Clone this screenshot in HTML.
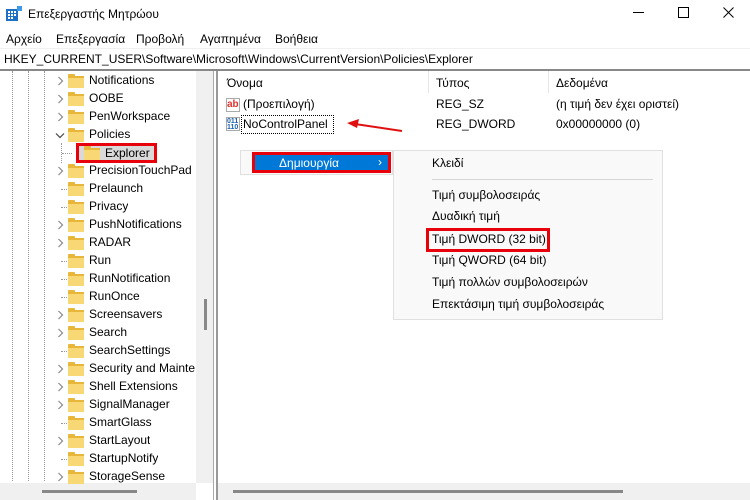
<!DOCTYPE html>
<html><head><meta charset="utf-8"><style>
*{margin:0;padding:0;box-sizing:border-box}
body{width:750px;height:500px;overflow:hidden;background:#fff;font-family:"Liberation Sans","DejaVu Sans",sans-serif;font-size:12px;color:#000;position:relative}
.a{position:absolute;white-space:nowrap}
.fold{position:absolute;width:16px;height:12px;background:#f8d775;border-top:2px solid #e8b73a}
.fold:before{content:"";position:absolute;left:0;top:-4px;width:7px;height:3px;background:#e8b73a;border-radius:1px 1px 0 0}
.chev{position:absolute}
.dv{position:absolute;border-left:1px dotted #999}
</style></head><body>
<!-- title -->
<svg class="a" style="left:6px;top:6px" width="16" height="16"><rect x="0" y="3" width="12" height="12" fill="#1e6fc8"/><g fill="#fff"><rect x="2" y="5" width="2" height="2"/><rect x="5" y="5" width="2" height="2"/><rect x="8" y="5" width="2" height="2"/><rect x="2" y="8" width="2" height="2"/><rect x="5" y="8" width="2" height="2"/><rect x="8" y="8" width="2" height="2"/><rect x="2" y="11" width="2" height="2"/><rect x="5" y="11" width="2" height="2"/></g><rect x="11" y="0" width="5" height="5" fill="#3d9ae8"/></svg>
<div class="a" style="left:28px;top:7px;font-size:12px">Επεξεργαστής Μητρώου</div>
<div class="a" style="left:633px;top:12px;width:11px;border-top:1px solid #000"></div>
<div class="a" style="left:678px;top:7px;width:11px;height:11px;border:1px solid #000"></div>
<svg class="a" style="left:723px;top:7px" width="11" height="11"><path d="M0.5 0.5L10.5 10.5M10.5 0.5L0.5 10.5" stroke="#000" stroke-width="1"/></svg>
<!-- menu -->
<div class="a" style="left:6px;top:32px">Αρχείο</div>
<div class="a" style="left:56px;top:32px">Επεξεργασία</div>
<div class="a" style="left:136px;top:32px">Προβολή</div>
<div class="a" style="left:200px;top:32px">Αγαπημένα</div>
<div class="a" style="left:275px;top:32px">Βοήθεια</div>
<!-- address -->
<div class="a" style="left:0;top:48px;width:750px;height:1px;background:#f0f0f0"></div>
<div class="a" style="left:4px;top:52px">HKEY_CURRENT_USER\Software\Microsoft\Windows\CurrentVersion\Policies\Explorer</div>
<div class="a" style="left:0;top:69px;width:750px;height:2px;background:#888"></div>
<!-- tree -->
<div class="dv" style="left:12px;top:71px;height:410px"></div>
<div class="dv" style="left:28px;top:71px;height:410px"></div>
<div class="dv" style="left:44px;top:71px;height:410px"></div>
<div class="dv" style="left:61px;top:143px;height:20px"></div>
<div class="a" style="left:62px;top:153px;width:10px;border-top:1px dotted #999"></div>
<div class="a" style="left:196px;top:71px;width:17px;height:412px;background:#f0f0f0"></div>
<div class="a" style="left:204px;top:299px;width:3px;height:31px;background:#888"></div>
<div class="a" style="left:213px;top:71px;width:1px;height:429px;background:#aaa"></div>
<div class="a" style="left:216px;top:71px;width:2px;height:429px;background:#999"></div>
<div class="a" style="left:0;top:483px;width:196px;height:17px;background:#f0f0f0"></div>
<div class="a" style="left:42px;top:490px;width:95px;height:3px;background:#888"></div>
<div class="a" style="left:218px;top:483px;width:532px;height:17px;background:#f0f0f0"></div>
<div class="a" style="left:233px;top:490px;width:390px;height:3px;background:#888"></div>
<div id="tree"></div>
<!-- explorer -->
<div class="a" style="left:76px;top:143px;width:81px;height:20px;border:3px solid #e8000b;background:#d9d9d9"></div>
<div class="fold" style="left:84px;top:148px"></div>
<div class="a" style="left:105px;top:146px">Explorer</div>
<!-- right pane -->
<div class="a" style="left:428px;top:71px;width:1px;height:22px;background:#e5e5e5"></div>
<div class="a" style="left:548px;top:71px;width:1px;height:22px;background:#e5e5e5"></div>
<div class="a" style="left:227px;top:76px">Όνομα</div>
<div class="a" style="left:436px;top:76px">Τύπος</div>
<div class="a" style="left:556px;top:76px">Δεδομένα</div>
<div class="a" style="left:226px;top:98px;width:14px;height:14px;border:1px solid #aaa;color:#e03030;font-weight:bold;font-size:10px;line-height:12px">ab</div>
<div class="a" style="left:243px;top:97px">(Προεπιλογή)</div>
<div class="a" style="left:436px;top:97px">REG_SZ</div>
<div class="a" style="left:556px;top:97px">(η τιμή δεν έχει οριστεί)</div>
<div class="a" style="left:226px;top:117px;width:14px;height:14px;border:1px solid #aaa;color:#1c5fb0;font-weight:bold;font-size:7px;line-height:6px;padding-top:1px">011<br>110</div>
<div class="a" style="left:241px;top:115px;width:93px;height:19px;border:1px dotted #000"></div>
<div class="a" style="left:243px;top:117px">NoControlPanel</div>
<div class="a" style="left:436px;top:117px">REG_DWORD</div>
<div class="a" style="left:556px;top:117px">0x00000000 (0)</div>
<svg class="a" style="left:345px;top:118px" width="60" height="16"><line x1="57" y1="13" x2="10" y2="6" stroke="#e01010" stroke-width="2"/><polygon points="2,5 14,1 12,10" fill="#e01010"/></svg>
<!-- context menu -->
<div class="a" style="left:240px;top:150px;width:153px;height:25px;background:#f9f9f9;border:1px solid #e0e0e0"></div>
<div class="a" style="left:252px;top:152px;width:139px;height:21px;background:#0078d7;border:3px solid #e8000b"></div>
<div class="a" style="left:279px;top:156px;color:#fff">Δημιουργία</div>
<div class="a" style="left:378px;top:155px;color:#fff">›</div>
<div class="a" style="left:393px;top:150px;width:270px;height:170px;background:#f9f9f9;border:1px solid #e0e0e0"></div>
<div class="a" style="left:432px;top:179px;width:221px;height:1px;background:#d5d5d5"></div>
<div class="a" style="left:432px;top:156px">Κλειδί</div>
<div class="a" style="left:432px;top:188px">Τιμή συμβολοσειράς</div>
<div class="a" style="left:432px;top:209px">Δυαδική τιμή</div>
<div class="a" style="left:426px;top:228px;width:124px;height:24px;border:3px solid #e8000b"></div>
<div class="a" style="left:432px;top:232px">Τιμή DWORD (32 bit)</div>
<div class="a" style="left:432px;top:253px">Τιμή QWORD (64 bit)</div>
<div class="a" style="left:432px;top:275px">Τιμή πολλών συμβολοσειρών</div>
<div class="a" style="left:432px;top:297px">Επεκτάσιμη τιμή συμβολοσειράς</div>
<script>
var items=[["Notifications",1],["OOBE",1],["PenWorkspace",1],["Policies",2],null,["PrecisionTouchPad",1],["Prelaunch",0],["Privacy",0],["PushNotifications",1],["RADAR",1],["Run",0],["RunNotification",0],["RunOnce",0],["Screensavers",1],["Search",1],["SearchSettings",0],["Security and Mainte",1],["Shell Extensions",1],["SignalManager",1],["SmartGlass",0],["StartLayout",1],["StartupNotify",0],["StorageSense",1]];
var h="";items.forEach(function(it,i){if(!it)return;var y=73+i*18;
if(it[1]==1)h+='<svg class="chev" style="left:57px;top:'+(y+3)+'px" width="8" height="10"><path d="M1.5 1L5.5 5L1.5 9" fill="none" stroke="#888" stroke-width="1.2"/></svg>';
else if(it[1]==2)h+='<svg class="chev" style="left:55px;top:'+(y+5)+'px" width="10" height="7"><path d="M1 1.5L5 5.5L9 1.5" fill="none" stroke="#444" stroke-width="1.2"/></svg>';
else h+='<div class="a" style="left:61px;top:'+(y+8)+'px;width:6px;border-top:1px dotted #999"></div>';
h+='<div class="fold" style="left:68px;top:'+(y+3)+'px"></div><div class="a" style="left:89px;top:'+y+'px;max-width:107px;overflow:hidden">'+it[0]+'</div>';});
document.getElementById("tree").innerHTML=h;
</script>
</body></html>
